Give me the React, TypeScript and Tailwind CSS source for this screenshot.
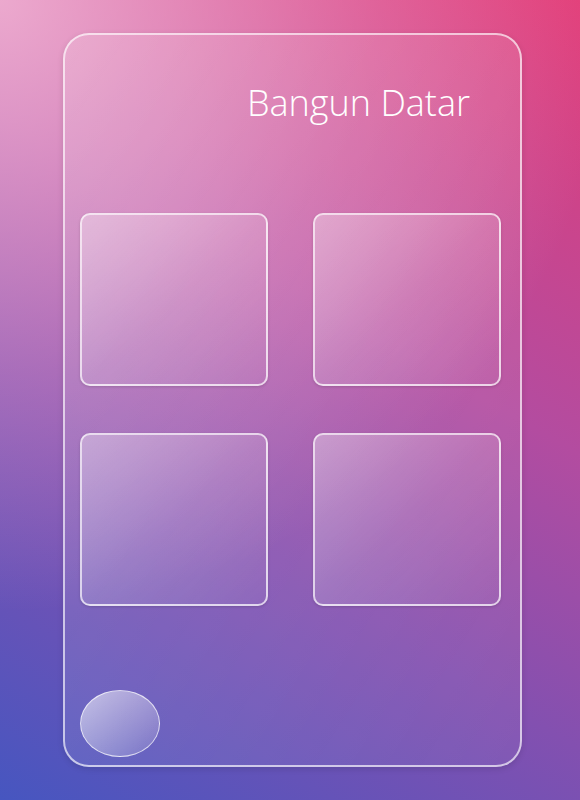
import React from 'react'

function Tile() {
  return (
    <div className="h-[173px] w-[188px] rounded-[10px] border-2 border-white/70 bg-gradient-to-br from-white/35 via-white/15 to-white/5 shadow-[0_1px_3px_rgba(0,0,0,0.15)]" />
  )
}

export default function App() {
  return (
    <div className="relative h-[800px] w-[580px] overflow-hidden bg-[linear-gradient(210deg,#e23d78_0%,#b34ca0_40%,#8350b0_66%,#4656c0_100%)]">
      {/* soft light in the top-left corner */}
      <div className="pointer-events-none absolute inset-0 bg-[radial-gradient(circle_at_0%_0%,rgba(255,210,230,0.7)_0%,rgba(255,200,225,0.25)_38%,rgba(255,255,255,0)_62%)]" />
      <div className="relative ml-[63px] pt-[33px]">
        <div className="flex h-[734px] w-[459px] flex-col rounded-[26px] border-2 border-white/65 bg-gradient-to-br from-white/15 to-white/5 shadow-[0_2px_6px_rgba(0,0,0,0.12)]">
          <div className="flex justify-end pr-[50px] pt-[46px]">
            <h1 className="font-['Open_Sans',sans-serif] text-[36px] font-light leading-[44px] text-white">
              Bangun Datar
            </h1>
          </div>
          <div className="mt-[88px] grid grid-cols-[188px_188px] gap-x-[45px] gap-y-[47px] pl-[15px]">
            <Tile />
            <Tile />
            <Tile />
            <Tile />
          </div>
          <div className="mt-auto mb-[8px] ml-[15px] h-[67px] w-[80px] rounded-[50%] border border-white/70 bg-gradient-to-br from-white/60 to-white/10" />
        </div>
      </div>
    </div>
  )
}
